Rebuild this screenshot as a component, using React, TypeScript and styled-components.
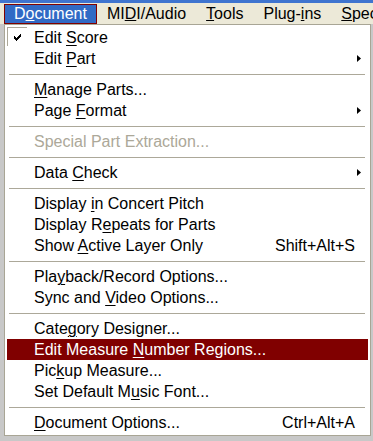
import styled, { createGlobalStyle } from "styled-components"

const GlobalStyle = createGlobalStyle`
  body {
    margin: 0;
    background: #c8c8c8;
    font-family: "Liberation Sans", Arial, sans-serif;
  }
`

const Screen = styled.div`
  width: 373px;
  height: 441px;
  overflow: hidden;
  background: #c8c8c8;
  font-size: 16px;
`

const TitleStrip = styled.div`
  height: 3px;
  background: #3f74cf;
`

const MenuBar = styled.div`
  display: flex;
  align-items: flex-start;
  height: 21px;
  box-sizing: border-box;
  padding: 1px 0 0 4px;
  background: #ece9d8;
  white-space: nowrap;
`

const BarItem = styled.div<{ $active?: boolean }>`
  height: 20px;
  box-sizing: border-box;
  padding: 0 9px;
  line-height: 18px;
  border: 1px solid ${(p) => (p.$active ? "#800000" : "transparent")};
  background: ${(p) => (p.$active ? "#316ac5" : "transparent")};
  color: ${(p) => (p.$active ? "#ffffff" : "#000000")};
`

const Desk = styled.div`
  display: flex;
  padding-left: 4px;
`

const Menu = styled.div`
  width: 367px;
  box-sizing: border-box;
  border: 1px solid #a8a595;
  background: #ffffff;
  padding: 2px;
`

const Item = styled.div<{ $highlight?: boolean; $disabled?: boolean }>`
  position: relative;
  display: grid;
  grid-template-columns: 27px 1fr auto 13px;
  align-items: center;
  height: 21px;
  line-height: 21px;
  white-space: nowrap;
  background: ${(p) => (p.$highlight ? "#800000" : "transparent")};
  color: ${(p) => (p.$highlight ? "#ffffff" : p.$disabled ? "#aca899" : "#000000")};

  u {
    text-underline-offset: 2px;
    text-decoration-thickness: 1px;
  }
`

const CheckCell = styled.div<{ $checked?: boolean }>`
  align-self: stretch;
  display: flex;
  align-items: center;
  justify-content: center;
  box-sizing: border-box;
  width: 20px;
  border-top: 1px solid ${(p) => (p.$checked ? "#aca899" : "transparent")};
  border-left: 1px solid ${(p) => (p.$checked ? "#aca899" : "transparent")};
  margin-bottom: 2px;
`

const Label = styled.span``

const Shortcut = styled.span``

const ArrowCell = styled.div`
  display: flex;
  align-items: center;
  padding-left: 2px;
`

const Separator = styled.div`
  height: 10px;
  display: flex;
  align-items: center;
  padding: 0 3px 0 2px;

  &::after {
    content: "";
    flex: 1;
    height: 1px;
    background: #aca899;
  }
`

type Entry =
  | { sep: true }
  | {
      sep?: false
      pre: string
      key: string
      post: string
      shortcut?: string
      sub?: boolean
      checked?: boolean
      disabled?: boolean
      highlight?: boolean
    }

const ENTRIES: Entry[] = [
  { pre: "Edit ", key: "S", post: "core", checked: true },
  { pre: "Edit ", key: "P", post: "art", sub: true },
  { sep: true },
  { pre: "", key: "M", post: "anage Parts..." },
  { pre: "Page ", key: "F", post: "ormat", sub: true },
  { sep: true },
  { pre: "Special Part Extraction...", key: "", post: "", disabled: true },
  { sep: true },
  { pre: "Data ", key: "C", post: "heck", sub: true },
  { sep: true },
  { pre: "Display ", key: "i", post: "n Concert Pitch" },
  { pre: "Display R", key: "e", post: "peats for Parts" },
  { pre: "Show ", key: "A", post: "ctive Layer Only", shortcut: "Shift+Alt+S" },
  { sep: true },
  { pre: "Pla", key: "y", post: "back/Record Options..." },
  { pre: "Sync and ", key: "V", post: "ideo Options..." },
  { sep: true },
  { pre: "Cate", key: "g", post: "ory Designer..." },
  { pre: "Edit Measure ", key: "N", post: "umber Regions...", highlight: true },
  { pre: "Pic", key: "k", post: "up Measure..." },
  { pre: "Set Default M", key: "u", post: "sic Font..." },
  { sep: true },
  { pre: "", key: "D", post: "ocument Options...", shortcut: "Ctrl+Alt+A" },
]

const BAR: { pre: string; key: string; post: string }[] = [
  { pre: "D", key: "o", post: "cument" },
  { pre: "MI", key: "D", post: "I/Audio" },
  { pre: "", key: "T", post: "ools" },
  { pre: "Plug-", key: "i", post: "ns" },
  { pre: "", key: "S", post: "pecial Tools" },
]

function CheckMark() {
  return (
    <svg width="7" height="7" viewBox="0 0 7 7">
      <path d="M0 2h1v1h1v1h1V3h1V2h1V1h1V0h1v3H6v1H5v1H4v1H3v1H2V6H1V5H0z" fill="#000" />
    </svg>
  )
}

function SubArrow({ color }: { color: string }) {
  return (
    <svg width="4" height="7" viewBox="0 0 4 7">
      <polygon points="0,0 4,3.5 0,7" fill={color} />
    </svg>
  )
}

export default function App() {
  return (
    <Screen>
      <GlobalStyle />
      <TitleStrip />
      <MenuBar>
        {BAR.map((b, i) => (
          <BarItem key={i} $active={i === 0}>
            {b.pre}
            <u>{b.key}</u>
            {b.post}
          </BarItem>
        ))}
      </MenuBar>
      <Desk>
        <Menu>
          {ENTRIES.map((e, i) =>
            e.sep ? (
              <Separator key={i} />
            ) : (
              <Item key={i} $highlight={e.highlight} $disabled={e.disabled}>
                <CheckCell $checked={e.checked}>{e.checked && <CheckMark />}</CheckCell>
                <Label>
                  {e.pre}
                  {e.key && <u>{e.key}</u>}
                  {e.post}
                </Label>
                <Shortcut>{e.shortcut}</Shortcut>
                <ArrowCell>{e.sub && <SubArrow color={e.highlight ? "#fff" : "#000"} />}</ArrowCell>
              </Item>
            ),
          )}
        </Menu>
      </Desk>
    </Screen>
  )
}
